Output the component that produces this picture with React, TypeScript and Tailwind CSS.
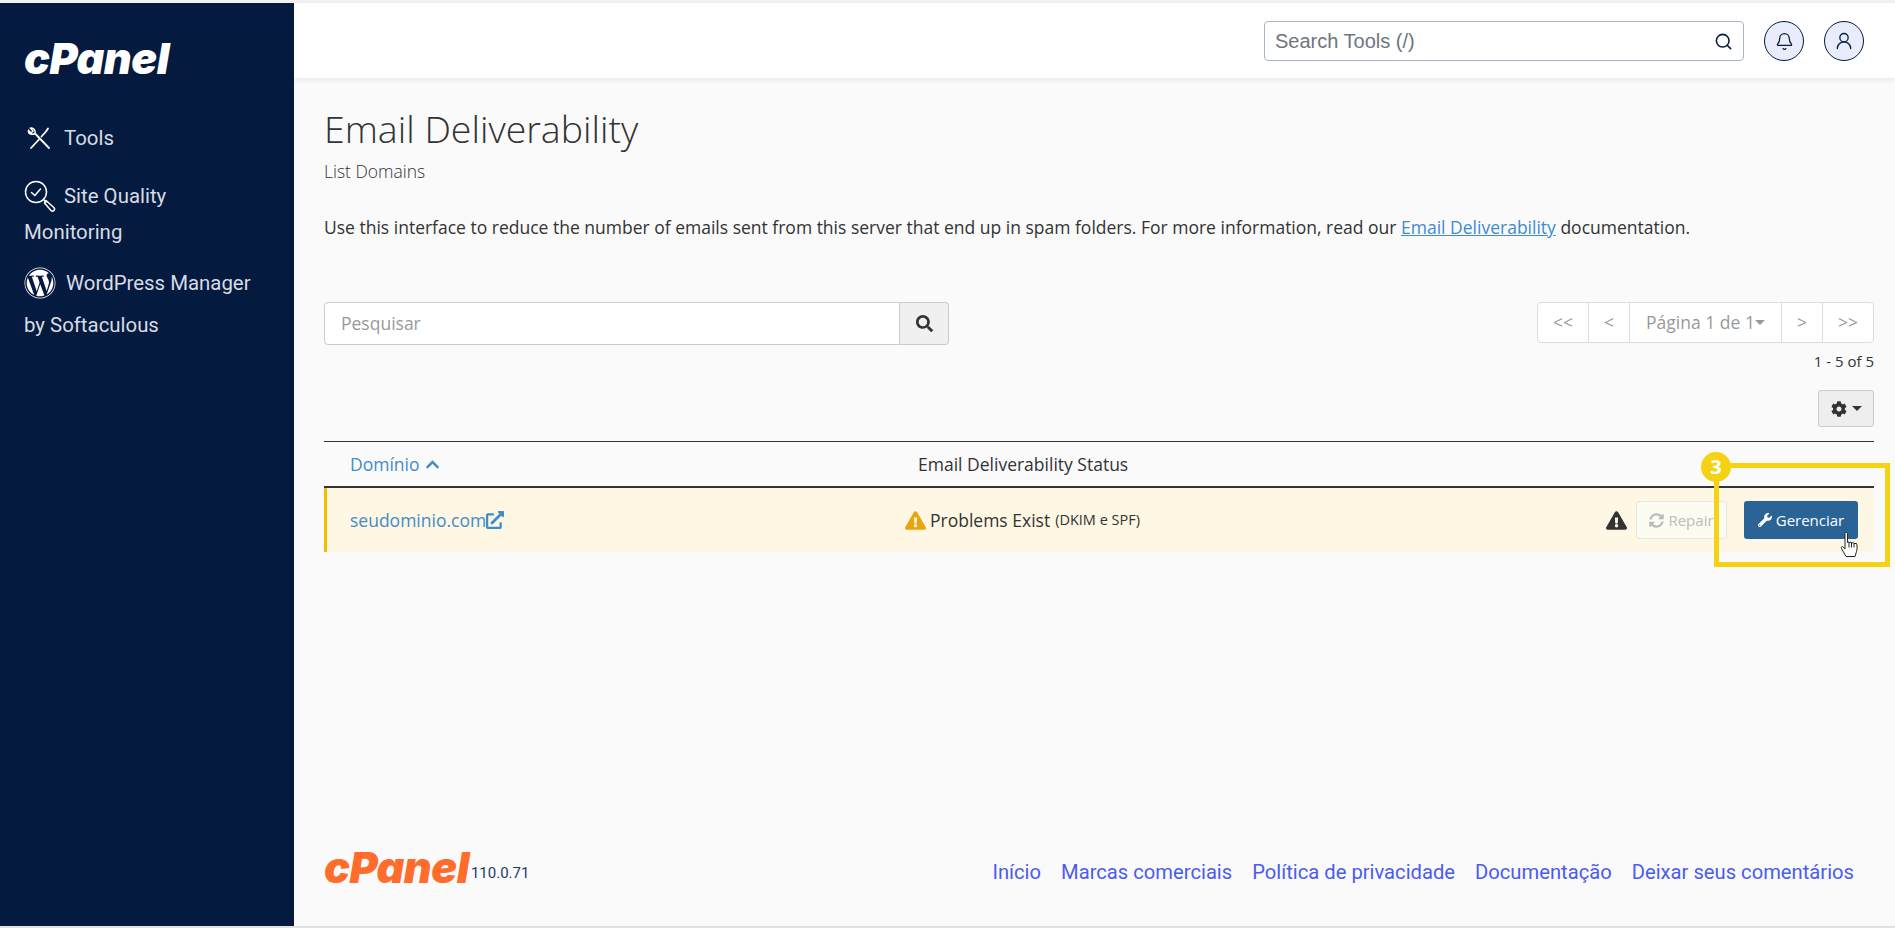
import { Bell, Search, UserRound } from "lucide-react";
import {
  FaChevronUp,
  FaCog,
  FaExclamationTriangle,
  FaExternalLinkAlt,
  FaSearch,
  FaSyncAlt,
  FaWordpress,
  FaWrench,
} from "react-icons/fa";

const ToolsIcon = () => (
  <svg viewBox="0 0 24 24" className="h-[24px] w-[24px]" fill="none" stroke="#fff" strokeWidth="1.8" strokeLinecap="round">
    <path d="M4 22 L12 13.5 M14.5 10.5 L19 5.5 L21 2.5" />
    <path d="M22 22 L8 7.5" />
    <path d="M8 7.5 C9 4.5 6.5 1.5 3.5 2.2 L6 5 L4.2 7 L1.5 4.5 C1 7.5 4.5 9.5 8 7.5 Z" strokeWidth="1.5" />
  </svg>
);

const QualityIcon = () => (
  <svg viewBox="0 0 32 32" className="h-[32px] w-[32px]" fill="none" stroke="#fff" strokeWidth="1.5" strokeLinecap="round" strokeLinejoin="round">
    <circle cx="12" cy="12" r="10.5" />
    <path d="M7.5 12.5 L10.8 15.5 L16.5 9" />
    <path d="M19.5 19.5 L22 22" />
    <path d="M22 20.5 L29.8 27.5 A2 2 0 0 1 27 30.5 L20.5 23 Z" />
  </svg>
);

const HandCursor = () => (
  <svg viewBox="0 0 18 26" className="absolute left-[121px] top-[63px] h-[27px] w-[18px]" fill="#fff" stroke="#222" strokeWidth="1" strokeLinejoin="round">
    <path d="M5 2 C5 .6 7.5 .6 7.5 2 L7.5 11 L9 10.4 L9.3 11 L11 10.6 L11.5 11.5 L13.5 11.2 L14 12 L16.5 12 C17.3 13 17.3 18 16.5 20 L15 25 L6 25 L1.5 17 C.8 15.2 2.4 14.6 3.3 15.5 L5 17.5 Z" />
    <path d="M9 11 V16 M11.5 11.5 V16 M14 12 V16" fill="none" />
  </svg>
);

const Caret = ({ className }: { className: string }) => (
  <span className={`inline-block h-0 w-0 border-x-[5px] border-t-[5px] border-x-transparent ${className}`} />
);

const footerLinks = ["Início", "Marcas comerciais", "Política de privacidade", "Documentação", "Deixar seus comentários"];

export default function App() {
  return (
    <div className="flex h-[928px] w-[1895px] flex-col overflow-hidden bg-[#f2f2f2] pt-[3px] font-['Open_Sans',sans-serif] text-[#333]">
      <div className="flex min-h-0 flex-1">
        {/* sidebar */}
        <aside className="flex h-[923px] w-[294px] shrink-0 flex-col bg-[#051a3f] pl-[24px] font-['Roboto',sans-serif] text-[20.4px] text-[#d7dce4]">
          <div className="mt-[31px] h-[48px] font-['Inter',sans-serif] text-[43px] leading-[48px] font-black tracking-[-0.5px] text-white italic">cPanel</div>
          <div className="mt-[41px] flex items-center pl-[3px]">
            <ToolsIcon />
            <span className="ml-[13px] leading-[30px]">Tools</span>
          </div>
          <div className="mt-[27px] flex items-center">
            <QualityIcon />
            <span className="ml-[8px] leading-[30px]">Site Quality</span>
          </div>
          <div className="mt-[5px] leading-[30px]">Monitoring</div>
          <div className="mt-[20px] flex items-center">
            <FaWordpress className="h-[32px] w-[32px] text-white" />
            <span className="ml-[10px] leading-[30px]">WordPress Manager</span>
          </div>
          <div className="mt-[11px] leading-[30px]">by Softaculous</div>
        </aside>

        <div className="flex h-[923px] min-w-0 flex-1 flex-col bg-[#fafafa]">
          {/* top bar */}
          <header className="flex h-[75px] shrink-0 items-start justify-end bg-white pt-[18px] pr-[31px] shadow-[0_2px_6px_rgba(0,0,0,0.08)]">
            <div className="flex h-[40px] w-[480px] items-center rounded-[4px] border border-[#aab4c8] bg-white pr-[10px] pl-[10px] font-['Liberation_Sans',sans-serif]">
              <input placeholder="Search Tools (/)" className="min-w-0 flex-1 text-[20px] outline-none placeholder:text-[#6f7580]" />
              <Search className="h-[19px] w-[19px] text-[#051a3f]" strokeWidth={2} />
            </div>
            <button className="ml-[20px] flex h-[40px] w-[40px] items-center justify-center rounded-full border border-[#051a3f] bg-[#e9edfb]">
              <Bell className="h-[19px] w-[19px] text-[#051a3f]" strokeWidth={1.6} />
            </button>
            <button className="ml-[20px] flex h-[40px] w-[40px] items-center justify-center rounded-full border border-[#051a3f] bg-[#e9edfb]">
              <UserRound className="h-[20px] w-[20px] text-[#051a3f]" strokeWidth={1.6} />
            </button>
          </header>

          {/* page body */}
          <main className="flex min-h-0 flex-1 flex-col pr-[21px] pl-[30px]">
            <h1 className="mt-[26px] text-[37.5px] leading-[50px] font-light text-[#333]">Email Deliverability</h1>
            <p className="mt-[5px] text-[17.5px] leading-[24px] font-light">List Domains</p>
            <p className="mt-[32px] text-[17.5px] leading-[24px]">
              Use this interface to reduce the number of emails sent from this server that end up in spam folders. For more information, read our{" "}
              <a className="text-[#3d8bd4] underline">Email Deliverability</a> documentation.
            </p>

            {/* search + pagination */}
            <div className="mt-[63px] flex items-start justify-between">
              <div className="flex h-[43px] w-[625px]">
                <input
                  placeholder="Pesquisar"
                  className="min-w-0 flex-1 rounded-l-[4px] border border-[#ccc] bg-white px-[16px] text-[17.5px] outline-none placeholder:text-[#999]"
                />
                <button className="flex w-[49px] items-center justify-center rounded-r-[4px] border border-l-0 border-[#ccc] bg-[#f0f0f0]">
                  <FaSearch className="h-[17px] w-[17px] text-[#333]" />
                </button>
              </div>
              <div className="flex h-[41px] divide-x divide-[#ddd] rounded-[4px] border border-[#ddd] bg-white text-[17.5px] text-[#999]">
                <span className="flex w-[51px] items-center justify-center">&lt;&lt;</span>
                <span className="flex w-[41px] items-center justify-center">&lt;</span>
                <span className="flex w-[152px] items-center justify-center whitespace-nowrap">
                  Página 1 de 1<Caret className="border-t-[#999]" />
                </span>
                <span className="flex w-[41px] items-center justify-center">&gt;</span>
                <span className="flex w-[50px] items-center justify-center">&gt;&gt;</span>
              </div>
            </div>
            <div className="mt-[6px] text-right text-[15px] leading-[20px]">1 - 5 of 5</div>
            <div className="mt-[19px] flex justify-end">
              <button className="flex h-[37px] w-[56px] items-center justify-center gap-[5px] rounded-[3px] border border-[#ccc] bg-[#eee]">
                <FaCog className="h-[16px] w-[16px] text-[#333]" />
                <Caret className="border-t-[#333]" />
              </button>
            </div>

            {/* table */}
            <div className="mt-[14px] flex h-[47px] items-center border-t border-b-2 border-t-[#333] border-b-[#333] text-[17.5px]">
              <div className="flex w-[594px] items-center gap-[5px] pl-[26px] text-[#428bca]">
                Domínio <FaChevronUp className="h-[15px] w-[15px]" />
              </div>
              <div>Email Deliverability Status</div>
            </div>
            <div className="relative flex h-[64px] items-center border-l-[3px] border-l-[#f0c000] bg-[#fdf7e3] text-[17.5px]">
              <div className="flex w-[578px] items-center pl-[23px] text-[#428bca]">
                seudominio.com
                <FaExternalLinkAlt className="h-[18px] w-[18px]" />
              </div>
              <div className="flex items-center">
                <FaExclamationTriangle className="h-[19px] w-[21px] text-[#eca40c]" />
                <span className="ml-[4px]">Problems Exist</span>
                <span className="ml-[5px] text-[14.5px]">(DKIM e SPF)</span>
              </div>
              <div className="ml-auto flex items-center pr-[16px] text-[15px]">
                <FaExclamationTriangle className="h-[19px] w-[21px] text-[#333]" />
                <button className="ml-[9px] flex h-[38px] w-[91px] items-center justify-center gap-[4px] rounded-[3px] border border-[#e6e6e0] bg-[#fdfcf3] text-[#bbb]">
                  <FaSyncAlt className="h-[15px] w-[15px]" /> Repair
                </button>
                <button className="ml-[17px] flex h-[38px] w-[114px] items-center justify-center gap-[4px] rounded-[3px] bg-[#2a6496] text-white">
                  <FaWrench className="h-[14px] w-[14px]" /> Gerenciar
                </button>
              </div>

              {/* tutorial highlight drawn over the row */}
              <div className="absolute top-[-25px] left-[1387px] h-[104px] w-[176px] border-[5px] border-[#f5d214]">
                <span className="absolute top-[-16px] left-[-18px] flex h-[30px] w-[30px] items-center justify-center rounded-full bg-[#f5d214] text-[20px] font-bold text-white">3</span>
                <HandCursor />
              </div>
            </div>

            {/* footer */}
            <footer className="mt-auto mb-[42px] flex items-end justify-between font-['Roboto',sans-serif]">
              <div className="flex items-end">
                <span className="mb-[-5px] h-[44px] font-['Inter',sans-serif] text-[43px] leading-[44px] font-black tracking-[-0.5px] text-[#ff6c2c] italic">cPanel</span>
                <span className="mb-[1px] ml-[2px] text-[15px] leading-[20px] text-[#1c3a6a]">110.0.71</span>
              </div>
              <nav className="mr-[20px] flex gap-[20px] text-[20.2px] leading-[24px] text-[#4a5cf0]">
                {footerLinks.map((l) => (
                  <a key={l}>{l}</a>
                ))}
              </nav>
            </footer>
          </main>
        </div>
      </div>
      <div className="h-[2px] shrink-0 bg-[#e2e2e2]" />
    </div>
  );
}
